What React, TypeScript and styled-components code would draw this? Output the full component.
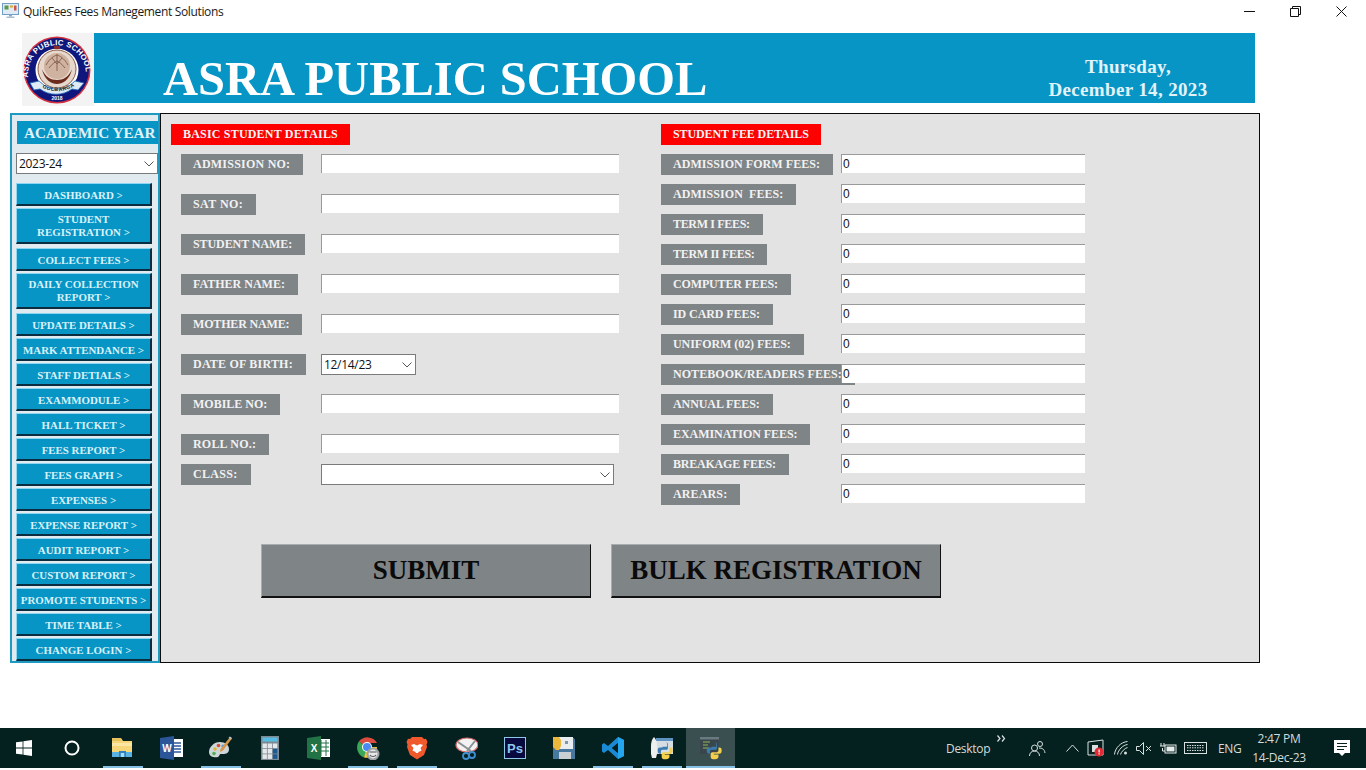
import React from "react";
import styled, { createGlobalStyle } from "styled-components";

const chevron = (c: string) =>
  `url("data:image/svg+xml,%3Csvg xmlns='http://www.w3.org/2000/svg' width='10' height='6'%3E%3Cpath d='M.5.5 5 5 9.5.5' fill='none' stroke='${c}' stroke-width='1'/%3E%3C/svg%3E")`;

const Global = createGlobalStyle`
  html, body { margin: 0; padding: 0; background: #fff; }
  #root { width: 1366px; height: 770px; overflow: hidden; }
  * { box-sizing: border-box; }
`;

const Screen = styled.div`
  width: 1366px;
  height: 770px;
  display: flex;
  flex-direction: column;
  background: #fff;
`;

const TitleBar = styled.div`
  height: 33px;
  flex: none;
  display: flex;
  align-items: flex-start;
  padding: 2px 0 0 2px;
`;
const AppIcon = styled.svg`
  width: 17px;
  height: 17px;
  flex: none;
`;
const WindowTitle = styled.div`
  margin-left: 4px;
  font: 12px/20px "Open Sans", sans-serif;
  color: #1a1a1a;
  letter-spacing: -0.35px;
  white-space: nowrap;
`;
const WindowControls = styled.div`
  margin-left: auto;
  display: flex;
  padding-right: 2px;
`;
const ControlButton = styled.div`
  width: 46px;
  height: 18px;
  display: flex;
  align-items: center;
  justify-content: center;
  svg { width: 11px; height: 11px; }
`;

const Header = styled.header`
  flex: none;
  height: 70px;
  margin-left: 22px;
  width: 1233px;
  display: flex;
`;
const Logo = styled.svg`
  width: 72px;
  height: 73px;
  flex: none;
  font-family: "Liberation Sans", sans-serif;
`;
const Banner = styled.div`
  flex: 1;
  background: #0795c5;
  display: flex;
  justify-content: space-between;
  padding-left: 69px;
`;
const SchoolName = styled.h1`
  margin: 18px 0 0;
  font: bold 48.5px/56px "Liberation Serif", serif;
  color: #fff;
  white-space: nowrap;
`;
const DateBlock = styled.div`
  width: 162px;
  margin: 22px 46px 0 0;
  text-align: center;
  font: bold 19px/23px "Liberation Serif", serif;
  letter-spacing: 0.35px;
  color: #e2f3fa;
  white-space: nowrap;
`;

const Workspace = styled.div`
  flex: none;
  display: flex;
  height: 550px;
  margin: 10px 0 0 10px;
`;

const Sidebar = styled.nav`
  width: 150px;
  height: 550px;
  flex: none;
  background: #e0eaef;
  border: 2px solid #1d9ac2;
  padding: 6px 0 0 4px;
`;
const YearHeading = styled.div`
  width: 141px;
  height: 23px;
  margin-left: 1px;
  background: #0795c5;
  color: #e2f3fa;
  font: bold 15.2px/23px "Liberation Serif", serif;
  padding-left: 7px;
  white-space: nowrap;
`;
const NativeSelect = styled.select<{ $w: number }>`
  display: block;
  width: ${(p) => p.$w}px;
  height: 21px;
  padding: 0 0 0 2px;
  appearance: none;
  border: 1px solid #7a7a7a;
  border-radius: 0;
  background: #fff ${chevron("%23555")} no-repeat right 3px center;
  font: 12px "Open Sans", sans-serif;
  letter-spacing: -0.3px;
  color: #111;
`;
const YearSelect = styled(NativeSelect)`
  margin-top: 9px;
`;
const NavList = styled.div`
  margin-top: 9px;
  display: flex;
  flex-direction: column;
  width: 136px;
`;
const NavButton = styled.div<{ $tall?: boolean }>`
  height: ${(p) => (p.$tall ? 36 : 23)}px;
  margin-bottom: ${(p) => (p.$tall ? 4 : 2)}px;
  padding-top: ${(p) => (p.$tall ? 1 : 2)}px;
  display: flex;
  align-items: center;
  justify-content: center;
  text-align: center;
  background: #0795c5;
  border-style: solid;
  border-width: 1px 2px 2px 1px;
  border-color: #8fd6f2 #0c2c40 #0c2c40 #8fd6f2;
  color: #d9f1f9;
  font: bold 10.9px/13px "Liberation Serif", serif;
  white-space: pre-line;
`;

const Main = styled.main`
  width: 1100px;
  height: 550px;
  flex: none;
  background: #e3e3e3;
  border: 1px solid #0a0a0a;
  padding: 10px 0 0 10px;
`;
const Columns = styled.div`
  display: flex;
  align-items: flex-start;
`;
const LeftColumn = styled.section`
  width: 490px;
  flex: none;
`;
const RightColumn = styled.section`
  flex: 1;
`;
const SectionTag = styled.div<{ $ls: number }>`
  display: inline-block;
  height: 21px;
  padding: 0 12px;
  background: #fe0000;
  color: #f5f5f5;
  font: bold 12px/21px "Liberation Serif", serif;
  letter-spacing: ${(p) => p.$ls}px;
  vertical-align: top;
`;
const TagLine = styled.div`
  height: 21px;
  margin-bottom: 9px;
`;
const StudentRow = styled.div<{ $gap: number }>`
  display: grid;
  grid-template-columns: 140px 298px;
  margin: 0 0 ${(p) => p.$gap}px 10px;
  height: 21px;
`;
const FeeRow = styled.div`
  display: grid;
  grid-template-columns: 180px 244px;
  margin-bottom: 9px;
  height: 21px;
`;
const FieldLabel = styled.label<{ $ls: number }>`
  justify-self: start;
  height: 21px;
  padding: 0 13px 0 12px;
  background: #7f8487;
  color: #f2f2f2;
  font: bold 12px/21px "Liberation Serif", serif;
  letter-spacing: ${(p) => p.$ls}px;
  white-space: pre;
`;
const TextInput = styled.input`
  position: relative;
  width: 100%;
  height: 19px;
  padding: 0 0 1px 1px;
  border: solid #9a9a9a;
  border-width: 1px 0 0 1px;
  border-radius: 0;
  outline: none;
  background: #fff;
  color: #111;
  font: 12px "Liberation Sans", sans-serif;
`;
const ActionRow = styled.div`
  display: flex;
  gap: 20px;
  margin: 30px 0 0 90px;
`;
const ActionButton = styled.div`
  width: 330px;
  height: 54px;
  display: flex;
  align-items: center;
  justify-content: center;
  background: #7f8487;
  border-style: solid;
  border-width: 1px 1px 2px 1px;
  border-color: #a9adaf #111 #111 #a9adaf;
  color: #0a0a0a;
  font: bold 27px/1 "Liberation Serif", serif;
  white-space: nowrap;
`;

const Taskbar = styled.footer`
  flex: none;
  height: 40px;
  margin-top: auto;
  margin-bottom: 2px;
  background: #04211f;
  display: flex;
  align-items: stretch;
  color: #d4dbdb;
  font-family: "Open Sans", sans-serif;
`;
const StartSlot = styled.div`
  width: 48px;
  display: flex;
  align-items: center;
  justify-content: center;
`;
const Apps = styled.div`
  display: flex;
  margin-left: 2px;
`;
const AppSlot = styled.div<{ $running?: boolean; $active?: boolean }>`
  position: relative;
  width: 49px;
  display: flex;
  align-items: center;
  justify-content: center;
  background: ${(p) => (p.$active ? "#3a4f50" : "transparent")};
  svg { width: 24px; height: 24px; }
  &::after {
    content: "";
    display: ${(p) => (p.$running ? "block" : "none")};
    position: absolute;
    bottom: 0;
    left: ${(p) => (p.$active ? 0 : 5)}px;
    right: ${(p) => (p.$active ? 0 : 4)}px;
    height: 2px;
    background: #86c0e3;
  }
`;
const Tray = styled.div`
  margin-left: auto;
  display: flex;
  align-items: center;
`;
const TrayText = styled.span<{ $w: number; $ml?: number }>`
  width: ${(p) => p.$w}px;
  margin-left: ${(p) => p.$ml ?? 0}px;
  font-size: 12px;
  letter-spacing: -0.3px;
  white-space: nowrap;
`;
const TraySlot = styled.div<{ $w: number; $top?: number }>`
  width: ${(p) => p.$w}px;
  display: flex;
  justify-content: center;
  align-items: center;
  margin-top: ${(p) => p.$top ?? 0}px;
`;
const Clock = styled.div`
  width: 78px;
  text-align: center;
  font-size: 12px;
  letter-spacing: -0.3px;
  line-height: 19px;
  white-space: nowrap;
`;

const stroke = { fill: "none", stroke: "#d8e0e0", strokeWidth: 1 };

const studentFields: { label: string; kind?: string; gap: number; ls: number }[] = [
  { label: "ADMISSION NO:", gap: 19, ls: 0.23 },
  { label: "SAT NO:", gap: 19, ls: 0.43 },
  { label: "STUDENT NAME:", gap: 19, ls: -0.08 },
  { label: "FATHER NAME:", gap: 19, ls: 0 },
  { label: "MOTHER NAME:", gap: 19, ls: -0.17 },
  { label: "DATE OF BIRTH:", kind: "date", gap: 19, ls: 0.21 },
  { label: "MOBILE NO:", gap: 19, ls: 0 },
  { label: "ROLL NO.:", gap: 9, ls: 0.2 },
  { label: "CLASS:", kind: "class", gap: 0, ls: 0.33 },
];

const feeFields: { label: string; ls: number }[] = [
  { label: "ADMISSION FORM FEES:", ls: 0.05 },
  { label: "ADMISSION  FEES:", ls: 0.06 },
  { label: "TERM I FEES:", ls: -0.33 },
  { label: "TERM II FEES:", ls: -0.3 },
  { label: "COMPUTER FEES:", ls: -0.15 },
  { label: "ID CARD FEES:", ls: -0.08 },
  { label: "UNIFORM (02) FEES:", ls: -0.05 },
  { label: "NOTEBOOK/READERS FEES:", ls: 0.05 },
  { label: "ANNUAL FEES:", ls: -0.08 },
  { label: "EXAMINATION FEES:", ls: -0.06 },
  { label: "BREAKAGE FEES:", ls: -0.21 },
  { label: "AREARS:", ls: 0.14 },
];

const navItems = [
  "DASHBOARD >",
  "STUDENT\nREGISTRATION >",
  "COLLECT FEES >",
  "DAILY COLLECTION\nREPORT >",
  "UPDATE DETAILS >",
  "MARK ATTENDANCE >",
  "STAFF DETIALS >",
  "EXAMMODULE >",
  "HALL TICKET >",
  "FEES REPORT >",
  "FEES GRAPH >",
  "EXPENSES >",
  "EXPENSE REPORT >",
  "AUDIT REPORT >",
  "CUSTOM REPORT >",
  "PROMOTE STUDENTS >",
  "TIME TABLE >",
  "CHANGE LOGIN >",
];

const SchoolLogo = () => (
  <Logo viewBox="0 0 72 73">
    <rect width="72" height="73" fill="#f3f3f3" />
    <circle cx="35" cy="37" r="33.5" fill="#d6303f" />
    <circle cx="35" cy="37" r="32" fill="#10177c" />
    <circle cx="35" cy="37" r="21.5" fill="#fff" />
    <circle cx="35" cy="36" r="19" fill="#e6d8cc" stroke="#8a5a46" strokeWidth="1" />
    <circle cx="35" cy="33" r="13" fill="#cfb3a0" />
    <path d="M24 32c4-7 8-9 11-10 3 1 7 3 11 10M27 35c3-4 6-6 8-7 2 1 5 3 8 7M35 21v17M30 25l5 6 5-6" fill="none" stroke="#8a6250" strokeWidth="1" />
    <path d="M20 36c2 11 10 15 15 15s13-4 15-15c-3 8-9 11-15 11s-12-3-15-11z" fill="#6b2a1c" />
    <rect x="32" y="13" width="6" height="3" fill="#8a2a2a" />
    <path d="M8 50l9-2 6 5c7 4 17 4 24 0l6-5 9 2-6 7-6-1c-9 7-23 7-32 0l-6 1z" fill="#dfeaf5" stroke="#1c64b4" strokeWidth="0.8" />
    <defs>
      <path id="logoArc" d="M6.500 44a29 29 0 1 1 57 0" />
      <path id="logoRibbon" d="M17 52.500c10 7.500 26 7.500 36 0" />
    </defs>
    <text fontSize="7.8" fontWeight="bold" fill="#fff" letterSpacing="0.2" transform="translate(0 2.500)">
      <textPath href="#logoArc" startOffset="2">ASRA PUBLIC SCHOOL</textPath>
    </text>
    <text fontSize="5.2" fontWeight="bold" fill="#222" letterSpacing="0.5">
      <textPath href="#logoRibbon" startOffset="4">GULBARGA</textPath>
    </text>
    <text x="35" y="66.500" textAnchor="middle" fontSize="5" fontWeight="bold" fill="#fff">2018</text>
  </Logo>
);

const WinFlag = () => (
  <svg width="16" height="16" viewBox="0 0 16 16">
    <path d="M0 2.300 6.600 1.400V7.600H0zM7.400 1.300 16 0V7.600H7.400zM0 8.400H6.600V14.600L0 13.700zM7.400 8.400H16V16L7.400 14.700z" fill="#fff" />
  </svg>
);

const Explorer = () => (
  <svg viewBox="0 0 24 24">
    <path d="M1 2h9l2 3h9v16H1z" fill="#f6d678" />
    <rect x="1" y="2" width="9" height="3" fill="#e8c25c" />
    <rect x="1" y="7" width="20" height="3" fill="#fbe6a3" />
    <rect x="1" y="16" width="20" height="5" fill="#58b3e3" />
    <rect x="8" y="15" width="7" height="6" fill="#2e84bd" />
    <rect x="9.800" y="17" width="3.400" height="4" fill="#a9dcf5" />
  </svg>
);
const Word = () => (
  <svg viewBox="0 0 24 24">
    <rect x="10" y="3" width="13" height="18" fill="#fff" />
    <path d="M13 7h8M13 10h8M13 13h8M13 16h8" stroke="#2b579a" strokeWidth="1.4" />
    <path d="M0 2 14 0v24L0 22z" fill="#2b579a" />
    <text x="7" y="16" textAnchor="middle" fontSize="10" fontWeight="bold" fill="#fff" fontFamily="Liberation Sans, sans-serif">W</text>
  </svg>
);
const Palette = () => (
  <svg viewBox="0 0 24 24">
    <path d="M11 6C5 6 0 11 0 16c0 5 6 6 9 5 2-1 1-3 3-3 4 0 8 0 8-5 0-4-4-7-9-7z" fill="#cfd6d8" />
    <circle cx="6" cy="13" r="1.800" fill="#e2b33c" />
    <circle cx="9.500" cy="9.500" r="1.800" fill="#d84b3b" />
    <circle cx="14" cy="10" r="1.600" fill="#4c9ad8" />
    <circle cx="5" cy="17.500" r="1.800" fill="#52ae5b" />
    <path d="M21 1l2 1.500-9 12-3 1.500.5-3z" fill="#d9964a" />
    <path d="M19.500 1.600 22 3.600l1-1.600-2-1.600z" fill="#b9bdbf" />
  </svg>
);
const Calculator = () => (
  <svg viewBox="0 0 24 24">
    <rect x="3" width="18" height="24" fill="#7d8a93" />
    <rect x="4.500" y="1.500" width="15" height="4" fill="#55bde2" />
    {[0, 1, 2].map((r) =>
      [0, 1, 2].map((c) => (
        <rect key={`${r}${c}`} x={4.5 + c * 5.2} y={7.5 + r * 5.4} width="4.400" height="4.600" fill={c === 2 && r > 0 ? "#1c5a93" : "#e4e8ea"} />
      ))
    )}
  </svg>
);
const Excel = () => (
  <svg viewBox="0 0 24 24">
    <rect x="10" y="3" width="13" height="18" fill="#fff" />
    <path d="M14 4v16M19 4v16M11 7h11M11 11h11M11 15h11" stroke="#217346" strokeWidth="1" />
    <path d="M0 2 14 0v24L0 22z" fill="#217346" />
    <text x="7" y="16" textAnchor="middle" fontSize="10" fontWeight="bold" fill="#fff" fontFamily="Liberation Sans, sans-serif">X</text>
  </svg>
);
const Chrome = () => (
  <svg viewBox="0 0 24 24">
    <path d="M11 11 2.800 5.500A11 11 0 0 1 21 7H11z" fill="#dd4b3e" />
    <path d="M11 11 2.800 5.500A11 11 0 0 0 8 21.600L12 13z" fill="#3aa757" />
    <path d="M11 11h10a11 11 0 0 1-13 10.600z" fill="#f5c63c" />
    <circle cx="11" cy="11" r="5" fill="#fff" />
    <circle cx="11" cy="11" r="4" fill="#4a8af4" />
    <circle cx="17" cy="18" r="6.500" fill="#9da2a4" />
    <circle cx="17" cy="18" r="4.400" fill="#e8e8e8" />
    <path d="M13.500 16h7M14 19c1 2 5 2 6 0" stroke="#555" strokeWidth="1.200" fill="none" />
  </svg>
);
const Brave = () => (
  <svg viewBox="0 0 24 24">
    <path d="M7 1h10l2 2 2-.2L22.500 6l-1 2.500.5 2.500L19 19l-7 4.500L5 19 2 11l.5-2.500L1.500 6 3 2.800 5 3z" fill="#f0592b" />
    <path d="M6 9l3-1 3 1.500L15 8l3 1-2.500 3 1 2.500L13.500 16l-1.500 3-1.500-3-3-1.500 1-2.500z" fill="#fff" />
    <path d="M10 17h4l-2 2.500z" fill="#f0592b" />
  </svg>
);
const Snip = () => (
  <svg viewBox="0 0 24 24">
    <ellipse cx="13" cy="9" rx="11" ry="7" fill="#f2f2f2" stroke="#d46a6a" strokeWidth="1.200" />
    <path d="M4 6l13 9M21 5 13 15" stroke="#8a8f93" strokeWidth="2" />
    <circle cx="18" cy="19" r="3" fill="none" stroke="#3d8fd1" strokeWidth="1.800" />
    <circle cx="12" cy="20" r="3" fill="none" stroke="#3d8fd1" strokeWidth="1.800" />
  </svg>
);
const Photoshop = () => (
  <svg viewBox="0 0 24 24">
    <rect x="1.500" y="1.500" width="21" height="21" fill="#08093f" stroke="#8ec6ec" strokeWidth="1" />
    <text x="12" y="17" textAnchor="middle" fontSize="13" fontWeight="bold" fill="#8ec6ec" fontFamily="Liberation Sans, sans-serif">Ps</text>
  </svg>
);
const Floppy = () => (
  <svg viewBox="0 0 24 24">
    <path d="M1 2h21l1 2v19H1z" fill="#49789f" />
    <rect x="5" y="1" width="16" height="12" fill="#e9edf0" />
    <rect x="7" y="16" width="12" height="7" fill="#c9cfd3" />
    <path d="M1 1h6l2 3v6l-2 4H4L1 11z" fill="#eab83b" />
    <rect x="13" y="5" width="3" height="3" fill="#7d98ad" />
  </svg>
);
const VSCode = () => (
  <svg viewBox="0 0 24 24">
    <path d="M17 1 23 4v16l-6 3-10-9-4 3-2-1.500V8.500L3 7l4 3zM17 7l-6 5 6 5z" fill="#1a8ad4" />
    <path d="M17 1 23 4v16l-6 3z" fill="#23a6ee" />
    <path d="M17 7l-6 5 6 5z" fill="#04211f" />
  </svg>
);
const Py = ({ x = 0, y = 0, s = 1 }: { x?: number; y?: number; s?: number }) => (
  <g transform={`translate(${x} ${y}) scale(${s})`}>
    <path d="M6 0h4c2 0 3 1 3 3v3H7v1h8H4C2 7 1 8 1 10v2c0 2 1 3 3 3h1v-3c0-1 1-2 2-2h5c1 0 2-1 2-2V3c0-2-2-3-4-3z" fill="#3b7bb0" />
    <path d="M16 7h1c2 0 3 1 3 3v2c0 2-1 3-3 3h-7v1h6v3c0 2-2 3-4 3H9c-2 0-3-1-3-3v-4c0-1 1-2 2-2h6c1 0 2-1 2-2z" fill="#f4cf4c" />
  </g>
);
const PyRocket = () => (
  <svg viewBox="0 0 24 24">
    <rect x="6" y="2" width="17" height="16" fill="#d6dee4" />
    <rect x="6" y="2" width="17" height="3" fill="#5c93c2" />
    <path d="M4 1c2 2 3 5 3 9v8l-1 4H2l-1-4v-8c0-4 1-7 3-9z" fill="#eee" />
    <Py x={7} y={6} s={0.78} />
  </svg>
);
const PyWindow = () => (
  <svg viewBox="0 0 24 24">
    <rect x="1" y="1" width="19" height="17" fill="#39474c" />
    <rect x="1" y="1" width="19" height="2.500" fill="#6b7a80" />
    <path d="M4 6h7M4 9h5M4 12h6" stroke="#8fb35a" strokeWidth="1.200" />
    <Py x={7} y={6} s={0.78} />
  </svg>
);

const apps: { C: React.FC; running?: boolean; active?: boolean }[] = [
  { C: Explorer, running: true },
  { C: Word },
  { C: Palette, running: true },
  { C: Calculator },
  { C: Excel },
  { C: Chrome, running: true },
  { C: Brave, running: true },
  { C: Snip },
  { C: Photoshop },
  { C: Floppy },
  { C: VSCode, running: true },
  { C: PyRocket, running: true },
  { C: PyWindow, running: true, active: true },
];

export default function App() {
  return (
    <Screen>
      <Global />
      <TitleBar>
        <AppIcon viewBox="0 0 17 17">
          <rect x="0.500" y="1.500" width="16" height="11" fill="#dfeaf5" stroke="#6f9fc8" />
          <rect x="2.500" y="3.500" width="4" height="4" fill="#5b9a4a" />
          <rect x="8" y="3.500" width="3" height="2" fill="#d8a63a" />
          <rect x="12" y="3.500" width="2.500" height="5" fill="#c8574a" />
          <rect x="7" y="12.500" width="3" height="2" fill="#8ba8c2" />
          <rect x="4.500" y="14.500" width="8" height="1.500" fill="#a7bed1" />
        </AppIcon>
        <WindowTitle>QuikFees Fees Manegement Solutions</WindowTitle>
        <WindowControls>
          <ControlButton>
            <svg viewBox="0 0 11 11"><path d="M0 5.500h11" stroke="#111" /></svg>
          </ControlButton>
          <ControlButton>
            <svg viewBox="0 0 11 11" fill="none" stroke="#111"><path d="M.5 2.500h8v8h-8zM2.500 2.500v-2h8v8h-2" /></svg>
          </ControlButton>
          <ControlButton>
            <svg viewBox="0 0 11 11"><path d="M.5.500l10 10M10.500.500l-10 10" stroke="#111" /></svg>
          </ControlButton>
        </WindowControls>
      </TitleBar>

      <Header>
        <SchoolLogo />
        <Banner>
          <SchoolName>ASRA PUBLIC SCHOOL</SchoolName>
          <DateBlock>
            Thursday,
            <br />
            December 14, 2023
          </DateBlock>
        </Banner>
      </Header>

      <Workspace>
        <Sidebar>
          <YearHeading>ACADEMIC YEAR</YearHeading>
          <YearSelect $w={142} defaultValue="2023-24">
            <option>2023-24</option>
          </YearSelect>
          <NavList>
            {navItems.map((n) => (
              <NavButton key={n} $tall={n.includes("\n")}>{n}</NavButton>
            ))}
          </NavList>
        </Sidebar>

        <Main>
          <Columns>
            <LeftColumn>
              <TagLine><SectionTag $ls={0.19}>BASIC STUDENT DETAILS</SectionTag></TagLine>
              {studentFields.map((f) => (
                <StudentRow key={f.label} $gap={f.gap}>
                  <FieldLabel $ls={f.ls}>{f.label}</FieldLabel>
                  {f.kind === "date" ? (
                    <NativeSelect $w={95} defaultValue="12/14/23"><option>12/14/23</option></NativeSelect>
                  ) : f.kind === "class" ? (
                    <NativeSelect $w={293}><option></option></NativeSelect>
                  ) : (
                    <TextInput />
                  )}
                </StudentRow>
              ))}
            </LeftColumn>
            <RightColumn>
              <TagLine><SectionTag $ls={-0.1}>STUDENT FEE DETAILS</SectionTag></TagLine>
              {feeFields.map((f) => (
                <FeeRow key={f.label}>
                  <FieldLabel $ls={f.ls}>{f.label}</FieldLabel>
                  <TextInput defaultValue="0" />
                </FeeRow>
              ))}
            </RightColumn>
          </Columns>
          <ActionRow>
            <ActionButton>SUBMIT</ActionButton>
            <ActionButton>BULK REGISTRATION</ActionButton>
          </ActionRow>
        </Main>
      </Workspace>

      <Taskbar>
        <StartSlot><WinFlag /></StartSlot>
        <StartSlot>
          <svg width="16" height="16" viewBox="0 0 16 16">
            <circle cx="8" cy="8" r="6.500" fill="none" stroke="#fff" strokeWidth="2" />
          </svg>
        </StartSlot>
        <Apps>
          {apps.map(({ C, running, active }, i) => (
            <AppSlot key={i} $running={running} $active={active}><C /></AppSlot>
          ))}
        </Apps>
        <Tray>
          <TrayText $w={43}>Desktop</TrayText>
          <TraySlot $w={24} $top={-20}>
            <svg width="9" height="7" viewBox="0 0 9 7" {...stroke} strokeWidth={1.2}><path d="M.5.500 3 3.500.5 6.500M5 .500l2.500 3L5 6.500" /></svg>
          </TraySlot>
          <TraySlot $w={48}>
            <svg width="17" height="17" viewBox="0 0 17 17" {...stroke}><circle cx="5.500" cy="8" r="3" /><path d="M.5 16c0-3 2-5 5-5s5 2 5 5" /><circle cx="11" cy="4" r="2.500" /><path d="M10 8c3 0 5.500 1 6 5" /></svg>
          </TraySlot>
          <TraySlot $w={22}>
            <svg width="13" height="8" viewBox="0 0 13 8" {...stroke}><path d="M.5 7.500 6.500 1l6 6.500" /></svg>
          </TraySlot>
          <TraySlot $w={26}>
            <svg width="18" height="18" viewBox="0 0 18 18">
              <path d="M1 3 16 1v15H1z" fill="none" stroke="#d8e0e0" />
              <rect x="5" y="6" width="6" height="7" fill="#d8e0e0" />
              <circle cx="12" cy="13" r="4.500" fill="#e02b35" />
              <rect x="11.500" y="10.500" width="1.200" height="3" fill="#fff" />
              <rect x="11.500" y="14.300" width="1.200" height="1.200" fill="#fff" />
            </svg>
          </TraySlot>
          <TraySlot $w={24}>
            <svg width="14" height="14" viewBox="0 0 14 14" {...stroke}><path d="M.5 13.500C1 7 7 1 13.500.5M3.500 13.500C4 9 9 4 13.500 3.500M6.500 13.500C7 11 11 7 13.500 6.500" /><circle cx="11.500" cy="12" r="1.500" fill="#d8e0e0" stroke="none" /></svg>
          </TraySlot>
          <TraySlot $w={21}>
            <svg width="16" height="13" viewBox="0 0 16 13" {...stroke}><path d="M.5 4.500h3l4-4v12l-4-4h-3zM10 4l5 5M15 4l-5 5" /></svg>
          </TraySlot>
          <TraySlot $w={28}>
            <svg width="17" height="12" viewBox="0 0 17 12"><path d="M1 1v3M4 1v3M0 4h5M2.500 6v3H5" fill="none" stroke="#e6ecec" /><rect x="5" y="3" width="11" height="8" fill="none" stroke="#e6ecec" /><rect x="6.500" y="4.500" width="8" height="5" fill="#e6ecec" /></svg>
          </TraySlot>
          <TraySlot $w={27}>
            <svg width="23" height="12" viewBox="0 0 23 12" {...stroke}><rect x=".5" y=".5" width="22" height="11" /><path d="M3 3.500h17M3 5.800h17M3 8.500h17" strokeDasharray="1.500 1" /></svg>
          </TraySlot>
          <TrayText $w={22} $ml={9}>ENG</TrayText>
          <Clock>
            2:47 PM
            <br />
            14-Dec-23
          </Clock>
          <TraySlot $w={48}>
            <svg width="16" height="16" viewBox="0 0 16 16">
              <path d="M0 0h16v13h-5l-3 3-3-3H0z" fill="#fff" />
              <path d="M3 3.500h10M3 6.500h10M3 9.500h7" stroke="#04211f" />
            </svg>
          </TraySlot>
        </Tray>
      </Taskbar>
    </Screen>
  );
}
